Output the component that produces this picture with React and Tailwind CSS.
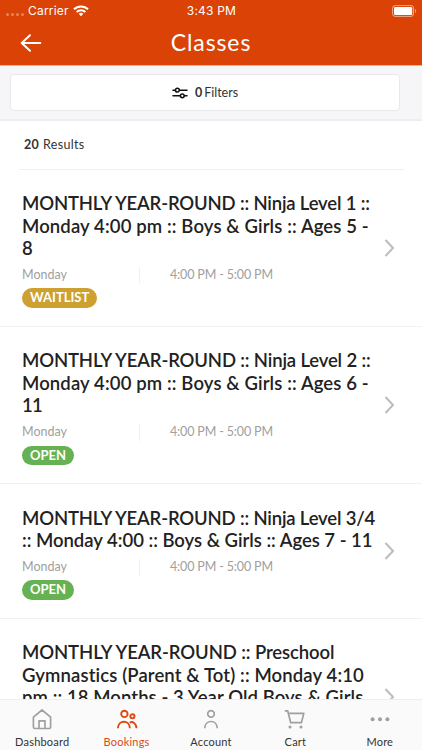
import { clsx } from "clsx";

const classes = [
  {
    title: [
      { text: "MONTHLY YEAR-ROUND :: Ninja Level 1 ::", tracking: "tracking-[-0.17px]" },
      { text: "Monday 4:00 pm :: Boys & Girls :: Ages 5 -", tracking: "tracking-[0.12px]" },
      { text: "8", tracking: "tracking-normal" },
    ],
    status: "WAITLIST",
  },
  {
    title: [
      { text: "MONTHLY YEAR-ROUND :: Ninja Level 2 ::", tracking: "tracking-[-0.15px]" },
      { text: "Monday 4:00 pm :: Boys & Girls :: Ages 6 -", tracking: "tracking-[0.12px]" },
      { text: "11", tracking: "tracking-[-0.8px]" },
    ],
    status: "OPEN",
  },
  {
    title: [
      { text: "MONTHLY YEAR-ROUND :: Ninja Level 3/4", tracking: "tracking-[-0.17px]" },
      { text: ":: Monday 4:00 :: Boys & Girls :: Ages 7 - 11", tracking: "tracking-[-0.02px]" },
    ],
    status: "OPEN",
  },
  {
    title: [
      { text: "MONTHLY YEAR-ROUND :: Preschool", tracking: "tracking-[-0.1px]" },
      { text: "Gymnastics (Parent & Tot) :: Monday 4:10", tracking: "tracking-[0.12px]" },
      { text: "pm :: 18 Months - 3 Year Old Boys & Girls", tracking: "tracking-[0.08px]" },
    ],
    status: "OPEN",
  },
];

const StatusBar = () => (
  <div className="grid h-[21px] grid-cols-3 items-center pl-[6px] pr-[5px] font-['Inter','Liberation_Sans',sans-serif] text-[12px] text-white">
    <div className="flex items-center">
      <div className="flex gap-[2px] pt-[7px]">
        {[0, 1, 2, 3].map((dot) => (
          <span key={dot} className="size-[3px] rounded-full bg-white/35" />
        ))}
      </div>
      <span className="ml-[4px] tracking-[0.2px]">Carrier</span>
      <svg viewBox="0 0 16 12" className="ml-[4px] h-[12px] w-[16px]" fill="none" stroke="currentColor" strokeWidth="2">
        <path d="M1 4.3a10 10 0 0 1 14 0M3.6 7a6.2 6.2 0 0 1 8.8 0" />
        <path d="M5.7 8.8a3.3 3.3 0 0 1 4.6 0L8 11.2z" fill="currentColor" stroke="none" />
      </svg>
    </div>
    <span className="text-center tracking-[0.2px]">3:43 PM</span>
    <svg viewBox="0 0 25 12" className="h-[12px] w-[25px] justify-self-end" fill="none">
      <rect x=".6" y=".6" width="21" height="10.8" rx="2.6" stroke="white" strokeOpacity=".55" />
      <rect x="2" y="2" width="18.2" height="8" rx="1.3" fill="white" />
      <path d="M23 4v4c1.7-.7 1.7-3.3 0-4z" fill="white" fillOpacity=".5" />
    </svg>
  </div>
);

const Header = () => (
  <header className="h-[66px] shrink-0 border-b border-[#f0b197] bg-[#da4305]">
    <StatusBar />
    <div className="grid h-[43px] grid-cols-[1fr_auto_1fr] items-center px-5 text-white">
      <svg viewBox="0 0 22 18" className="h-[18px] w-[22px]" fill="none" stroke="currentColor" strokeWidth="2" strokeLinecap="round" strokeLinejoin="round">
        <path d="M20.3 9H1.7M10 1.2L1.7 9l8.3 7.8" />
      </svg>
      <h1 className="text-[23px] font-normal tracking-[0.9px]">Classes</h1>
    </div>
  </header>
);

const FilterBar = () => (
  <div className="h-[55px] shrink-0 border-b-2 border-[#eeeef1] bg-[#f6f6f9] pl-[10px] pr-[22px] pt-[8px]">
    <button className="flex h-[37px] w-full items-center justify-center rounded-[4px] border-[1.5px] border-[#e9e9ec] bg-white pt-px text-[12.5px] text-[#333]">
      <svg viewBox="0 0 16 12" className="mr-[7px] h-[12px] w-[16px]" fill="none" stroke="#111" strokeWidth="1.5" strokeLinecap="round">
        <path d="M1 3.2h2.3M7.5 3.2H15M1 8.8h7.2M12.4 8.8H15" />
        <circle cx="5.4" cy="3.2" r="1.9" />
        <circle cx="10.3" cy="8.8" r="1.9" />
      </svg>
      <b className="mr-[2px] font-bold">0</b>
      <span>Filters</span>
    </button>
  </div>
);

const ClassRow = ({ title, status }) => (
  <li className="flex items-center border-b border-[#f1f1f1] pb-[18.4px] pl-[22px] pr-[27px] pt-[22.1px]">
    <div className="flex-1">
      <h2 className="text-[18.5px] font-semibold leading-[22.4px] text-[#222]">
        {title.map(({ text, tracking }) => (
          <span key={text} className={clsx("block whitespace-nowrap", tracking)}>
            {text}
          </span>
        ))}
      </h2>
      <div className="mt-[6px] flex h-[20px] items-center text-[12.5px] text-[#a0a0a0]">
        <span className="w-[117px]">Monday</span>
        <span className="h-[17px] w-px bg-[#f1f1f1]" />
        <span className="ml-[30px] tracking-[-0.15px]">4:00 PM - 5:00 PM</span>
      </div>
      <span
        className={clsx(
          "mt-[3px] flex h-[19.5px] w-fit items-center rounded-full px-[8px] text-[13px] font-bold text-white",
          status === "OPEN" ? "bg-[#66b152]" : "bg-[#cda02f]"
        )}
      >
        {status}
      </span>
    </div>
    <svg viewBox="0 0 11 18" className="mb-[4px] h-[18px] w-[11px]" fill="none" stroke="#bcbcbc" strokeWidth="2">
      <path d="M1.5 1L9 9l-7.5 8" />
    </svg>
  </li>
);

const tabs = [
  {
    label: "Dashboard",
    icon: <path d="M2.4 8.2L11 1l8.6 7.2V18a1.5 1.5 0 0 1-1.5 1.5H3.9A1.5 1.5 0 0 1 2.4 18zM8 19.5v-7.7h6v7.7" />,
  },
  {
    label: "Bookings",
    active: true,
    icon: (
      <g strokeWidth="1.9">
        <circle cx="8.4" cy="4.9" r="3.2" />
        <circle cx="16.4" cy="7.3" r="2.1" />
        <path d="M1.9 19.2c.2-4 2.9-6.4 6-6.4s5.8 2.4 6 6.4M13.7 13.7c2.9-1.9 6.5.6 6.8 5.5" />
      </g>
    ),
  },
  {
    label: "Account",
    icon: (
      <>
        <circle cx="11" cy="4.9" r="3.3" />
        <path d="M4.7 19.2c.2-4.2 3-6.7 6.3-6.7s6.1 2.5 6.3 6.7" />
      </>
    ),
  },
  {
    label: "Cart",
    icon: (
      <>
        <path d="M.8 1.8h2.9l3 11.9h10.7l2.4-9.3H4.4" />
        <circle cx="6" cy="17.9" r="1.5" fill="currentColor" stroke="none" />
        <circle cx="17" cy="17.9" r="1.5" fill="currentColor" stroke="none" />
      </>
    ),
  },
  {
    label: "More",
    icon: (
      <g fill="currentColor" stroke="none">
        <circle cx="3.6" cy="10.2" r="2" />
        <circle cx="11" cy="10.2" r="2" />
        <circle cx="18.4" cy="10.2" r="2" />
      </g>
    ),
  },
];

const TabBar = () => (
  <nav className="grid h-[51px] shrink-0 grid-cols-5 border-t border-[#eeeeee] bg-[#fafafa]">
    {tabs.map(({ label, icon, active }) => (
      <button key={label} className={clsx("flex flex-col items-center pt-[9px]", active ? "text-[#da4a12]" : "text-[#a0a0a0]")}>
        <svg viewBox="0 0 22 21" className="h-[21px] w-[22px]" fill="none" stroke="currentColor" strokeWidth="1.7" strokeLinejoin="round">
          {icon}
        </svg>
        <span className={clsx("mt-[4px] text-[11px] leading-[16px] tracking-[0.2px]", !active && "text-[#333]")}>{label}</span>
      </button>
    ))}
  </nav>
);

const App = () => {
  return (
    <div className="flex h-[750px] w-[422px] flex-col overflow-hidden bg-white font-['Lato','Liberation_Sans',sans-serif]">
      <Header />
      <FilterBar />
      <main className="min-h-0 flex-1 overflow-hidden">
        <div className="ml-[19px] mr-[18px] flex h-[49px] items-center gap-[4px] border-b border-[#f1f1f1] pl-[5px] text-[12.5px] tracking-[0.3px] text-[#333]">
          <b className="font-bold">20</b>
          <span>Results</span>
        </div>
        <ul>
          {classes.map((item) => (
            <ClassRow key={item.title[0].text} {...item} />
          ))}
        </ul>
      </main>
      <TabBar />
    </div>
  );
};

export default App;
